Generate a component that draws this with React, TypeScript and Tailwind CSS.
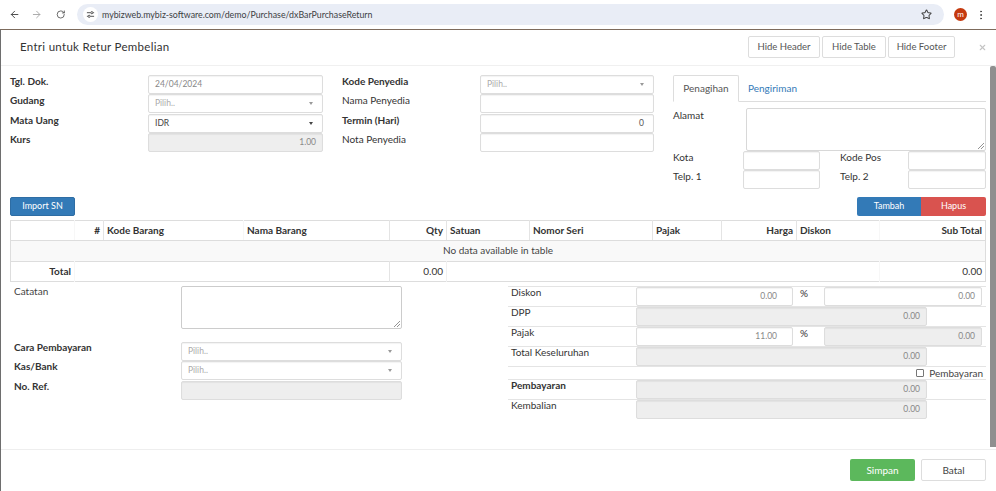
import { ArrowLeft, ArrowRight, RotateCw, Star, EllipsisVertical, X } from "lucide-react";
import type { ReactNode } from "react";

const inputBase = "h-[19px] border border-[#dddddd] rounded-[2px] px-[6px] text-[8.5px] flex items-center shadow-[inset_0_1px_1px_rgba(0,0,0,0.05)]";

function Field({ value = "", align = "left", disabled = false, muted = false, className = "w-full" }: { value?: string; align?: "left" | "right"; disabled?: boolean; muted?: boolean; className?: string }) {
  return (
    <div className={`${inputBase} shrink-0 ${disabled ? "bg-[#eeeeee] border-[#d8d8d8]" : "bg-white"} ${align === "right" ? "justify-end" : ""} ${muted ? "text-[#888888]" : "text-[#555555]"} ${className}`}>
      {value}
    </div>
  );
}

function Select({ value = "Pilih..", dark = false }: { value?: string; dark?: boolean }) {
  return (
    <div className={`${inputBase} w-full bg-white justify-between pr-[9px] ${dark ? "text-[#444444]" : "text-[#aaaaaa]"}`}>
      <span>{value}</span>
      <span className={`border-x-[2.5px] border-t-[3px] border-x-transparent ${dark ? "border-t-[#444444]" : "border-t-[#999999]"}`} />
    </div>
  );
}

function Label({ children, bold = false, className = "" }: { children: ReactNode; bold?: boolean; className?: string }) {
  return <div className={`text-[10px] leading-[13px] whitespace-nowrap text-[#333333] ${bold ? "font-bold" : ""} ${className}`}>{children}</div>;
}

function FormRow({ label, bold, children }: { label: string; bold?: boolean; children: ReactNode }) {
  return (
    <div className="flex h-[19.3px]">
      <Label bold={bold} className="w-[138px] shrink-0">{label}</Label>
      <div className="flex-1">{children}</div>
    </div>
  );
}

function TotalRow({ label, bold, children }: { label: string; bold?: boolean; children: ReactNode }) {
  return (
    <div className="flex h-[20px] border-t border-[#e4e4e4]">
      <Label bold={bold} className="w-[128px] pl-[3px] -mt-[1px] shrink-0">{label}</Label>
      <div className="flex-1 flex">{children}</div>
    </div>
  );
}

const heads: [string, string, number][] = [
  ["", "", 64],
  ["#", "text-right", 29],
  ["Kode Barang", "text-left", 140],
  ["Nama Barang", "text-left", 146],
  ["Qty", "text-right", 57],
  ["Satuan", "text-left", 83],
  ["Nomor Seri", "text-left", 123],
  ["Pajak", "text-left", 69],
  ["Harga", "text-right", 75],
  ["Diskon", "text-left", 83],
  ["Sub Total", "text-right", 106],
];

const headBorders: Record<number, string> = {
  0: "border-r-[#f7f7f7]",
  1: "border-r-[#e4e4e4]",
  2: "border-r-[#f7f7f7]",
  3: "border-r-[#e4e4e4]",
  4: "border-r-[#e4e4e4]",
  5: "border-r-[#e4e4e4]",
  6: "border-r-[#e4e4e4]",
  7: "border-r-[#e4e4e4]",
  8: "border-r-[#e4e4e4]",
  9: "border-r-[#f7f7f7]",
};

export default function App() {
  return (
    <div className="w-[996px] h-[491px] overflow-hidden bg-white flex flex-col text-[#333333] font-['Lato',sans-serif]">
      {/* browser bar */}
      <div className="h-[29px] shrink-0 flex items-center bg-white pl-[9px] pr-[9px]">
        <ArrowLeft className="w-[13px] h-[13px] text-[#474747]" />
        <ArrowRight className="w-[13px] h-[13px] text-[#a8a8a8] ml-[11px]" />
        <RotateCw className="w-[11px] h-[11px] text-[#474747] ml-[13px]" />
        <div className="ml-[12px] w-[867px] h-[21px] rounded-full bg-[#e9edf6] flex items-center pl-[6px] pr-[10px] shrink-0">
          <div className="w-[15px] h-[15px] rounded-full bg-white flex items-center justify-center">
            <svg viewBox="0 0 10 10" className="w-[9px] h-[9px] text-[#444444]" fill="none" stroke="currentColor" strokeWidth="1">
              <path d="M1 3h4M8 3h1M1 7h1M5 7h4" />
              <circle cx="6.5" cy="3" r="1.2" />
              <circle cx="3.5" cy="7" r="1.2" />
            </svg>
          </div>
          <span className="ml-[4px] text-[8.8px] text-[#3c4043] whitespace-nowrap">mybizweb.mybiz-software.com/demo/Purchase/dxBarPurchaseReturn</span>
          <Star className="w-[11px] h-[11px] ml-auto mr-[2px] text-[#444444]" strokeWidth={2.2} />
        </div>
        <div className="ml-[10px] w-[13px] h-[13px] rounded-full bg-[#c5390e] text-white text-[8px] leading-[12px] text-center shrink-0">m</div>
        <EllipsisVertical className="w-[12px] h-[12px] ml-[8px] text-[#474747] shrink-0" />
      </div>

      {/* modal */}
      <div className="flex-1 min-h-0 flex flex-col border-t border-t-[#7d6b5c] border-l border-l-[#6e6e6e]">
        <div className="h-[36px] shrink-0 flex items-center border-b border-[#f0f0f0] pl-[19px] pr-[10px] pb-[1px]">
          <span className="text-[11.5px] tracking-[0.3px] text-[#333333]">Entri untuk Retur Pembelian</span>
          <div className="ml-auto flex gap-[2px]">
            <button className="w-[72px] h-[22px] border border-[#dddddd] rounded-[2px] text-[9.5px] text-[#555555]">Hide Header</button>
            <button className="w-[64px] h-[22px] border border-[#dddddd] rounded-[2px] text-[9.5px] text-[#555555]">Hide Table</button>
            <button className="w-[67px] h-[22px] border border-[#dddddd] rounded-[2px] text-[9.5px] text-[#555555]">Hide Footer</button>
          </div>
          <X className="w-[9px] h-[9px] ml-[23px] -mr-[1px] text-[#c4c4c4]" strokeWidth={3} />
        </div>

        <div className="flex-1 min-h-0 flex">
          <div className="flex-1 min-w-0 pl-[9px] pr-[4px] pt-[9px]">
            {/* top form */}
            <div className="flex h-[122px]">
              <div className="w-[313px] shrink-0">
                <FormRow label="Tgl. Dok." bold><Field value="24/04/2024" muted /></FormRow>
                <FormRow label="Gudang" bold><Select /></FormRow>
                <FormRow label="Mata Uang" bold><Select value="IDR" dark /></FormRow>
                <FormRow label="Kurs" bold><Field value="1.00" align="right" disabled muted /></FormRow>
              </div>
              <div className="w-[312px] shrink-0 ml-[19px]">
                <FormRow label="Kode Penyedia" bold><Select /></FormRow>
                <FormRow label="Nama Penyedia"><Field /></FormRow>
                <FormRow label="Termin (Hari)" bold><Field value="0" align="right" className="w-full pr-[9px]" /></FormRow>
                <FormRow label="Nota Penyedia"><Field /></FormRow>
              </div>
              <div className="w-[313px] shrink-0 ml-[19px]">
                <div className="h-[27px] flex border-b border-[#dddddd]">
                  <div className="w-[66px] h-[27px] border border-[#dddddd] border-b-white rounded-t-[2px] bg-white text-[10px] text-[#555555] flex items-center justify-center">Penagihan</div>
                  <div className="w-[58px] text-[10px] text-[#337ab7] flex items-center justify-end">Pengiriman</div>
                </div>
                <div className="flex mt-[6px]">
                  <Label className="w-[73px] shrink-0 pt-[1px] text-[10.5px]">Alamat</Label>
                  <div className="flex-1 h-[43px] border border-[#d8d8d8] rounded-[2px] relative">
                    <svg viewBox="0 0 6 6" className="absolute right-[1px] bottom-[1px] w-[6px] h-[6px] text-[#666666]" stroke="currentColor" strokeWidth="0.7"><path d="M0 6L6 0M3 6L6 3" /></svg>
                  </div>
                </div>
                <div className="flex h-[19.3px]">
                  <Label className="w-[70px] shrink-0">Kota</Label>
                  <Field className="w-[77px]" />
                  <Label className="w-[88px] shrink-0 pl-[20px]">Kode Pos</Label>
                  <Field className="w-[78px]" />
                </div>
                <div className="flex h-[19.3px]">
                  <Label className="w-[70px] shrink-0">Telp. 1</Label>
                  <Field className="w-[77px]" />
                  <Label className="w-[88px] shrink-0 pl-[20px]">Telp. 2</Label>
                  <Field className="w-[78px]" />
                </div>
              </div>
            </div>

            {/* table buttons */}
            <div className="flex justify-between h-[19px]">
              <button className="w-[65px] pb-[1px] bg-[#337ab7] border border-[#2e6da4] rounded-[2px] text-white text-[9px]">Import SN</button>
              <div className="flex">
                <button className="w-[64px] pb-[1px] bg-[#337ab7] rounded-l-[2px] text-white text-[9px]">Tambah</button>
                <button className="w-[65px] pb-[1px] bg-[#d9534f] rounded-r-[2px] text-white text-[9px]">Hapus</button>
              </div>
            </div>

            {/* items table */}
            <table className="mt-[4px] w-[975px] table-fixed border-collapse border border-[#dddddd] text-[10px]">
              <colgroup>
                {heads.map((h, i) => <col key={i} style={{ width: h[2] }} />)}
              </colgroup>
              <thead>
                <tr className="h-[20px]">
                  {heads.map((h, i) => (
                    <th key={i} className={`${h[1]} font-bold px-[3px] border-b border-[#dddddd] ${i < 10 ? "border-r" : ""} ${headBorders[i] ?? ""}`}>{h[0]}</th>
                  ))}
                </tr>
              </thead>
              <tbody>
                <tr className="h-[21px] bg-[#f9f9f9]">
                  <td colSpan={11} className="text-center pb-[2px] text-[#444444]">No data available in table</td>
                </tr>
                <tr className="h-[20px] border-t border-[#dddddd]">
                  <td className="text-right font-bold px-[3px] border-r border-r-[#f7f7f7]">Total</td>
                  <td colSpan={3} className="border-r border-r-[#e4e4e4]" />
                  <td className="text-right px-[3px] border-r border-r-[#f0f0f0]">0.00</td>
                  <td colSpan={5} className="border-r border-r-[#f7f7f7]" />
                  <td className="text-right px-[3px]">0.00</td>
                </tr>
              </tbody>
            </table>

            {/* lower form */}
            <div className="flex mt-[4px]">
              <div className="w-[392px] shrink-0 pl-[4px]">
                <div className="flex">
                  <Label className="w-[167px] shrink-0 -mt-[1px] text-[#444444]">Catatan</Label>
                  <div className="flex-1 h-[43px] border border-[#cccccc] rounded-[2px] relative">
                    <svg viewBox="0 0 6 6" className="absolute right-[1px] bottom-[1px] w-[6px] h-[6px] text-[#666666]" stroke="currentColor" strokeWidth="0.7"><path d="M0 6L6 0M3 6L6 3" /></svg>
                  </div>
                </div>
                <div className="mt-[13px]">
                  <div className="flex h-[19.3px]"><Label bold className="w-[167px] shrink-0 -mt-[1px]">Cara Pembayaran</Label><div className="flex-1"><Select /></div></div>
                  <div className="flex h-[19.3px]"><Label bold className="w-[167px] shrink-0 -mt-[1px]">Kas/Bank</Label><div className="flex-1"><Select /></div></div>
                  <div className="flex h-[19.3px]"><Label bold className="w-[167px] shrink-0 -mt-[1px]">No. Ref.</Label><div className="flex-1"><Field disabled /></div></div>
                </div>
              </div>
              <div className="w-[478px] shrink-0 ml-[106px]">
                <TotalRow label="Diskon">
                  <Field value="0.00" align="right" muted className="w-[157px] pr-[15px]" />
                  <span className="w-[31px] pl-[7px] text-[10px] leading-[12px] shrink-0">%</span>
                  <Field value="0.00" align="right" muted className="w-[158px]" />
                </TotalRow>
                <TotalRow label="DPP"><Field value="0.00" align="right" disabled muted className="w-[291px]" /></TotalRow>
                <TotalRow label="Pajak">
                  <Field value="11.00" align="right" muted className="w-[157px] pr-[15px]" />
                  <span className="w-[31px] pl-[7px] text-[10px] leading-[12px] shrink-0">%</span>
                  <Field value="0.00" align="right" disabled muted className="w-[158px]" />
                </TotalRow>
                <TotalRow label="Total Keseluruhan"><Field value="0.00" align="right" disabled muted className="w-[291px]" /></TotalRow>
                <div className="h-[13px] border-t border-[#e4e4e4] flex items-center justify-end gap-[5px] pr-[3px]">
                  <span className="w-[8px] h-[8px] border border-[#777777] rounded-[1px]" />
                  <span className="text-[10px] text-[#444444]">Pembayaran</span>
                </div>
                <TotalRow label="Pembayaran" bold><Field value="0.00" align="right" disabled muted className="w-[291px]" /></TotalRow>
                <TotalRow label="Kembalian"><Field value="0.00" align="right" disabled muted className="w-[291px]" /></TotalRow>
              </div>
            </div>
          </div>
          <div className="w-[6px] shrink-0 bg-[#8f8f8f] h-[381px] rounded-t-[2px]" />
        </div>

        {/* footer */}
        <div className="h-[42px] shrink-0 border-t border-[#eeeeee] flex justify-end items-start gap-[6px] pt-[9px] pr-[10px]">
          <button className="w-[65px] h-[22px] bg-[#5cb85c] rounded-[2px] text-white text-[10px]">Simpan</button>
          <button className="w-[65px] h-[22px] border border-[#dddddd] rounded-[2px] text-[10px] text-[#444444]">Batal</button>
        </div>
      </div>
    </div>
  );
}
